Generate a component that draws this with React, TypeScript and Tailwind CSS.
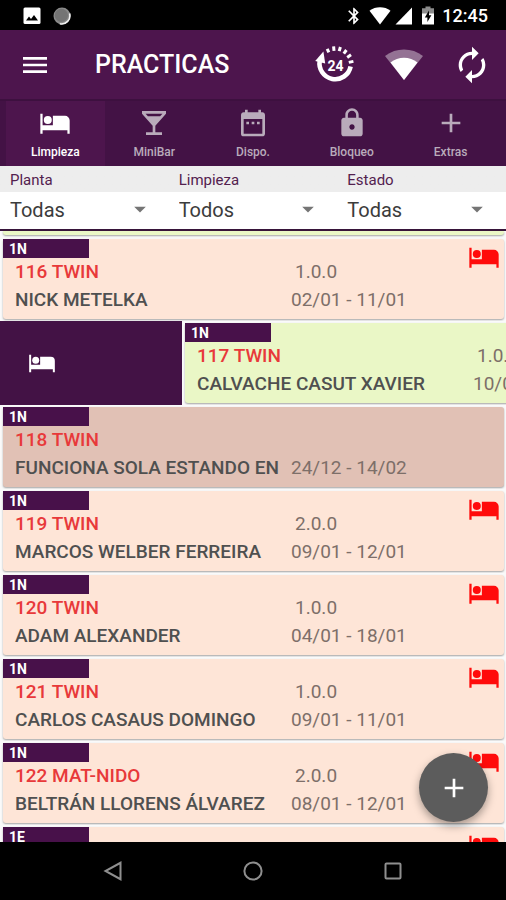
import React, { useState } from "react";
import { clsx } from "clsx";
import {
  MdAdd,
  MdArrowDropDown,
  MdAutorenew,
  MdBluetooth,
  MdDateRange,
  MdLocalBar,
  MdLock,
  MdMenu,
} from "react-icons/md";

type Room = {
  floor: string;
  name: string;
  guest: string;
  pax?: string;
  dates: string;
  tone: "peach" | "green" | "brown";
  bed?: boolean;
  swiped?: boolean;
};

const rooms: Room[] = [
  { floor: "1N", name: "116 TWIN", guest: "NICK METELKA", pax: "1.0.0", dates: "02/01 - 11/01", tone: "peach", bed: true },
  { floor: "1N", name: "117 TWIN", guest: "CALVACHE CASUT XAVIER", pax: "1.0.0", dates: "10/01 - 12/01", tone: "green", swiped: true },
  { floor: "1N", name: "118 TWIN", guest: "FUNCIONA SOLA ESTANDO EN", dates: "24/12 - 14/02", tone: "brown" },
  { floor: "1N", name: "119 TWIN", guest: "MARCOS WELBER FERREIRA", pax: "2.0.0", dates: "09/01 - 12/01", tone: "peach", bed: true },
  { floor: "1N", name: "120 TWIN", guest: "ADAM ALEXANDER", pax: "1.0.0", dates: "04/01 - 18/01", tone: "peach", bed: true },
  { floor: "1N", name: "121 TWIN", guest: "CARLOS CASAUS DOMINGO", pax: "1.0.0", dates: "09/01 - 11/01", tone: "peach", bed: true },
  { floor: "1N", name: "122 MAT-NIDO", guest: "BELTRÁN LLORENS ÁLVAREZ", pax: "2.0.0", dates: "08/01 - 12/01", tone: "peach", bed: true },
  { floor: "1E", name: "", guest: "", dates: "", tone: "peach", bed: true },
];

const BedIcon = ({ className }: { className?: string }) => (
  <svg viewBox="0 0 24 24" fill="currentColor" className={className}>
    <path d="M1 5h1.7v8.6h7.7V6.6H19.5A3.5 3.5 0 0 1 23 10.1V20h-1.7v-2.6H2.7V20H1Z" />
    <circle cx="6.6" cy="9.7" r="3" />
  </svg>
);

const tabs = [
  { label: "Limpieza", Icon: BedIcon },
  { label: "MiniBar", Icon: MdLocalBar },
  { label: "Dispo.", Icon: MdDateRange },
  { label: "Bloqueo", Icon: MdLock },
  { label: "Extras", Icon: MdAdd },
];

const filters = [
  { id: "planta", label: "Planta", value: "Todas" },
  { id: "limpieza", label: "Limpieza", value: "Todos" },
  { id: "estado", label: "Estado", value: "Todas" },
];

const tones = {
  peach: "bg-[#fee5d7]",
  green: "bg-[#eaf7c6]",
  brown: "bg-[#e1c1b5]",
};

const StatusBar = () => (
  <div className="flex h-[30px] shrink-0 items-center bg-black pt-px pr-[18px] pl-[23px] text-white">
    <svg viewBox="0 0 18 18" className="size-[18px]">
      <rect x="0.5" y="0.5" width="17" height="16.5" rx="1.5" fill="#fff" />
      <path d="M3 13.5 L6 9.5 L8 12 L11 8 L15 13.5Z" fill="#000" />
    </svg>
    <svg viewBox="0 0 18 18" className="ml-3 size-[18px]">
      <circle cx="9" cy="9" r="8.5" fill="#8a8a8a" />
      <path d="M16.6 6.5 A8.3 8.3 0 0 1 6.8 16.8" fill="none" stroke="#f2f2f2" strokeWidth="1.6" />
      <circle cx="8.4" cy="8.4" r="6.6" fill="#747474" />
    </svg>
    <div className="ml-auto flex items-center">
      <MdBluetooth className="size-5" />
      <svg viewBox="0 0 22 18" className="ml-[5px] h-[18px] w-[22px]">
        <path d="M0.5 3.8 C6.5 -0.8 15.5 -0.8 21.5 3.8 L11 17.5Z" fill="#fff" />
      </svg>
      <svg viewBox="0 0 18 18" className="ml-1 size-[18px]">
        <path d="M0.5 17.5 H17 V0.5Z" fill="#fff" />
      </svg>
      <svg viewBox="0 0 12 19" className="ml-[9px] h-[19px] w-3">
        <path d="M3.5 0.5 h5 v1.8 H12 V8 H0 V2.3 h3.5Z" fill="#8c8c8c" />
        <path d="M0 7.5 H12 V18.5 H0Z" fill="#fff" />
        <path d="M7 4.5 L2.8 11.5 H5.4 V16 L9.4 9.3 H7Z" fill="#000" />
      </svg>
      <span className="ml-2 text-lg leading-6 font-medium">12:45</span>
    </div>
  </div>
);

const Clock24Icon = () => (
  <svg viewBox="0 0 40 40" className="size-10">
    <path d="M4.8 15.5 A15.6 15.6 0 1 0 35.6 21.5" fill="none" stroke="#fff" strokeWidth="4.6" />
    <path d="M8.4 6.6 L0.2 16 L10.2 18.4Z" fill="#fff" />
    <g stroke="#fff" strokeWidth="3">
      <path d="M13.8 7.4 L12.2 3.8" />
      <path d="M19 5.8 L18.6 1.4" />
      <path d="M24.2 6.2 L25.4 2" />
      <path d="M28.8 8.6 L31.4 5" />
      <path d="M32.2 12.4 L36 9.8" />
      <path d="M33.8 17.4 L38.4 16.4" />
    </g>
    <text x="20.5" y="25.5" textAnchor="middle" fontSize="14" fontWeight="700" fill="#fff">
      24
    </text>
  </svg>
);

const WifiIcon = () => (
  <svg viewBox="0 0 38 32" className="h-8 w-[38px]">
    <path d="M0 7 C11 -1.6 27 -1.6 38 7 L19 31Z" fill="#fff" fillOpacity="0.4" />
    <path d="M5.5 13.5 C13 7 25 7 32.5 13.5 L19 31Z" fill="#fff" />
  </svg>
);

const AppBar = () => (
  <header className="flex h-[69px] shrink-0 items-center bg-[#4d154d] pr-[14px] pl-[19px] text-white">
    <button aria-label="Menú">
      <MdMenu className="size-8" />
    </button>
    <h1 className="ml-11 text-[25px] leading-8 font-medium">PRACTICAS</h1>
    <div className="ml-auto flex items-center">
      <button aria-label="Historial 24 horas">
        <Clock24Icon />
      </button>
      <button aria-label="Conexión" className="ml-[30px]">
        <WifiIcon />
      </button>
      <button aria-label="Actualizar" className="ml-[29px]">
        <MdAutorenew className="size-10" />
      </button>
    </div>
  </header>
);

const FilterBar = () => (
  <div className="shrink-0 border-b-2 border-[#37143a] bg-linear-to-b from-[#ededed] from-[26px] to-white to-[26px]">
    <div className="grid grid-cols-3">
      {filters.map(({ id, label, value }) => (
        <div key={id} className="relative">
          <label htmlFor={id} className="block h-[26px] pl-[10px] text-[15px] leading-7 text-[#53214f]">
            {label}
          </label>
          <select
            id={id}
            defaultValue={value}
            className="block h-[37px] w-full appearance-none bg-transparent pb-[2px] pl-[10px] text-xl text-[#3c3c3c] outline-none"
          >
            <option>{value}</option>
          </select>
          <MdArrowDropDown className="pointer-events-none absolute right-[15px] bottom-[6px] size-7 text-[#757575]" />
        </div>
      ))}
    </div>
  </div>
);

const RoomCard = ({ room }: { room: Room }) => (
  <article className={clsx("relative h-20 w-full shrink-0 rounded-[3px] shadow-[0_1px_2px_rgba(0,0,0,0.35)]", tones[room.tone])}>
    <div className="h-[19px] w-[86px] bg-[#48114a] pl-[6px] text-sm leading-5 font-bold text-white">{room.floor}</div>
    {room.name && (
      <div className="grid grid-cols-[276px_1fr] pl-3 text-[19px] leading-7">
        <h2 className="font-medium text-[#e8393a]">{room.name}</h2>
        <p className="pl-1 text-[#7d6f69]">{room.pax}</p>
        <p className="font-medium whitespace-nowrap text-[#4f5050]">{room.guest}</p>
        <p className="whitespace-nowrap text-[#7d6f69]">{room.dates}</p>
      </div>
    )}
    {room.bed && <BedIcon className="absolute top-[2px] right-1 size-8 text-[#ff0b0b]" />}
  </article>
);

const RoomRow = ({ room }: { room: Room }) => (
  <li className="flex h-[84px] overflow-hidden">
    {room.swiped && (
      <button aria-label="Limpieza" className="flex w-[182px] shrink-0 items-center bg-[#431245] pl-7 text-white">
        <BedIcon className="size-7" />
      </button>
    )}
    <div className="flex w-full shrink-0 py-[2px] pr-[2px] pl-[3px]">
      <RoomCard room={room} />
    </div>
  </li>
);

const NavBar = () => (
  <nav className="flex h-[58px] shrink-0 items-center bg-black px-[43px] text-[#8f8f8f]">
    <button aria-label="Atrás" className="flex flex-1 justify-center">
      <svg viewBox="0 0 20 20" className="size-5" fill="none" stroke="currentColor" strokeWidth="2">
        <path d="M17.5 1.8 V18.2 L2.5 10Z" />
      </svg>
    </button>
    <button aria-label="Inicio" className="flex flex-1 justify-center">
      <svg viewBox="0 0 20 20" className="size-5" fill="none" stroke="currentColor" strokeWidth="2">
        <circle cx="10" cy="10" r="8.6" />
      </svg>
    </button>
    <button aria-label="Recientes" className="flex flex-1 justify-center">
      <svg viewBox="0 0 20 20" className="size-5" fill="none" stroke="currentColor" strokeWidth="2">
        <rect x="2.5" y="2.5" width="15" height="15" rx="1" />
      </svg>
    </button>
  </nav>
);

const App = () => {
  const [active, setActive] = useState("Limpieza");

  return (
    <div className="flex h-dvh flex-col bg-[#fafafa] font-[Roboto,sans-serif]">
      <StatusBar />
      <AppBar />
      <div className="flex h-[67px] shrink-0 border-t-2 border-[#3d103f] bg-[#431245] px-[6px]">
        {tabs.map(({ label, Icon }) => (
          <button
            key={label}
            onClick={() => setActive(label)}
            className={clsx(
              "flex flex-1 flex-col items-center pt-[6px] text-xs font-medium",
              active === label ? "bg-[#4d154d] text-white" : "text-[#b9abbb]"
            )}
          >
            <Icon className="size-8" />
            <span className="mt-[5px]">{label}</span>
          </button>
        ))}
      </div>
      <FilterBar />
      <main className="relative min-h-0 flex-1">
        <ul className="h-full overflow-y-auto [scrollbar-width:none]">
          {/* tail of the card scrolled under the filters */}
          <li className="pr-[2px] pb-[2px] pl-[3px]">
            <div className="h-1 rounded-b-[3px] bg-[#eaf7c6] shadow-[0_1px_2px_rgba(0,0,0,0.35)]" />
          </li>
          {rooms.map((room, i) => (
            <RoomRow key={i} room={room} />
          ))}
        </ul>
        <button
          aria-label="Añadir"
          className="absolute right-[18px] bottom-5 flex size-[69px] items-center justify-center rounded-full bg-[#5c5c5c] text-white shadow-[0_4px_8px_rgba(0,0,0,0.35)]"
        >
          <MdAdd className="size-8" />
        </button>
      </main>
      <NavBar />
    </div>
  );
};

export default App;
